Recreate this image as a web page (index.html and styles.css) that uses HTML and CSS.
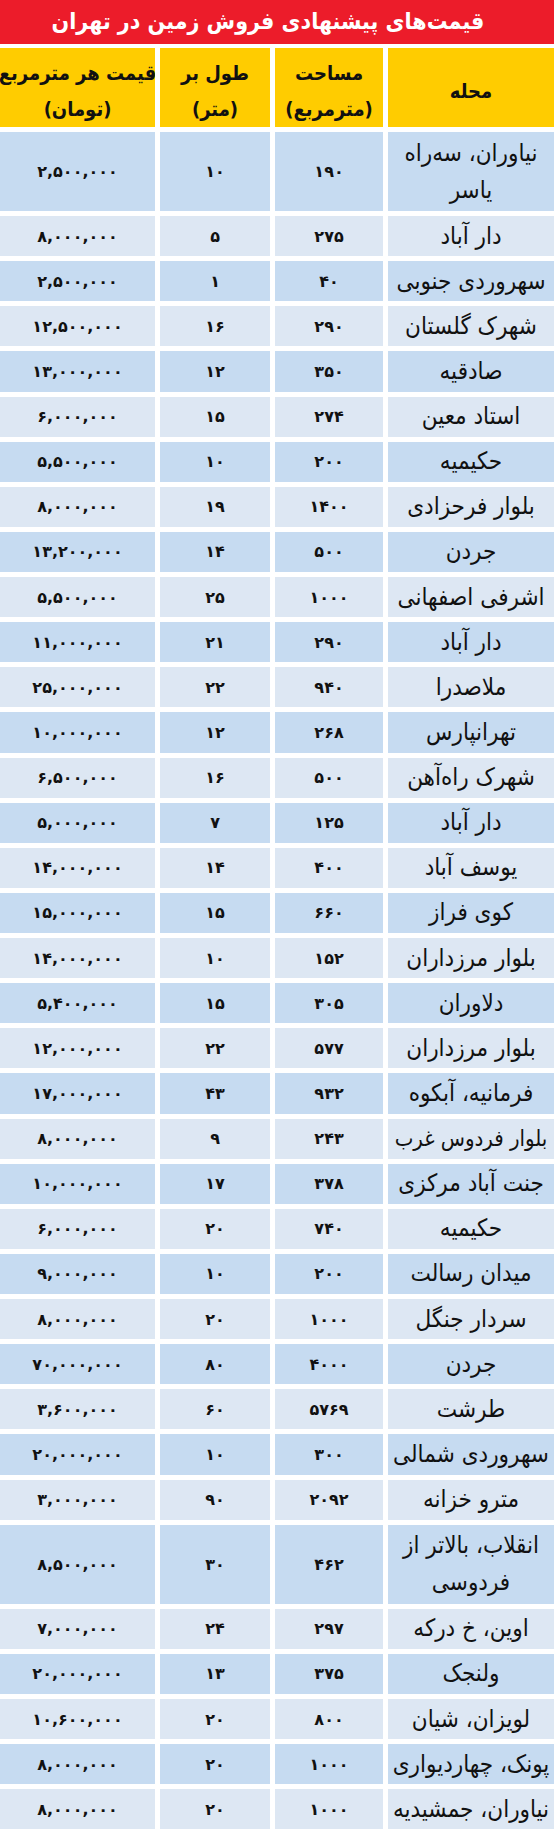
FILE: index.html
```html
<!DOCTYPE html>
<html lang="fa" dir="rtl">
<head>
<meta charset="utf-8">
<title>قیمت‌های پیشنهادی فروش زمین در تهران</title>
<link rel="stylesheet" href="styles.css">
</head>
<body>
<div class="sheet">
  <div class="title">قیمت‌های پیشنهادی فروش زمین در تهران</div>
  <div class="table">
    <div class="row head">
      <div class="cell">محله</div>
      <div class="cell">مساحت<br>(مترمربع)</div>
      <div class="cell">طول بر<br>(متر)</div>
      <div class="cell">قیمت هر مترمربع<br>(تومان)</div>
    </div>
    <div class="row tall"><div class="cell name">نیاوران، سه‌راه<br>یاسر</div><div class="cell num">۱۹۰</div><div class="cell num">۱۰</div><div class="cell num">۲,۵۰۰,۰۰۰</div></div>
    <div class="row"><div class="cell name">دار آباد</div><div class="cell num">۲۷۵</div><div class="cell num">۵</div><div class="cell num">۸,۰۰۰,۰۰۰</div></div>
    <div class="row"><div class="cell name">سهروردی جنوبی</div><div class="cell num">۴۰</div><div class="cell num">۱</div><div class="cell num">۲,۵۰۰,۰۰۰</div></div>
    <div class="row"><div class="cell name">شهرک گلستان</div><div class="cell num">۲۹۰</div><div class="cell num">۱۶</div><div class="cell num">۱۲,۵۰۰,۰۰۰</div></div>
    <div class="row"><div class="cell name">صادقیه</div><div class="cell num">۳۵۰</div><div class="cell num">۱۲</div><div class="cell num">۱۳,۰۰۰,۰۰۰</div></div>
    <div class="row"><div class="cell name">استاد معین</div><div class="cell num">۲۷۴</div><div class="cell num">۱۵</div><div class="cell num">۶,۰۰۰,۰۰۰</div></div>
    <div class="row"><div class="cell name">حکیمیه</div><div class="cell num">۲۰۰</div><div class="cell num">۱۰</div><div class="cell num">۵,۵۰۰,۰۰۰</div></div>
    <div class="row"><div class="cell name">بلوار فرحزادی</div><div class="cell num">۱۴۰۰</div><div class="cell num">۱۹</div><div class="cell num">۸,۰۰۰,۰۰۰</div></div>
    <div class="row"><div class="cell name">جردن</div><div class="cell num">۵۰۰</div><div class="cell num">۱۴</div><div class="cell num">۱۳,۲۰۰,۰۰۰</div></div>
    <div class="row"><div class="cell name">اشرفی اصفهانی</div><div class="cell num">۱۰۰۰</div><div class="cell num">۲۵</div><div class="cell num">۵,۵۰۰,۰۰۰</div></div>
    <div class="row"><div class="cell name">دار آباد</div><div class="cell num">۲۹۰</div><div class="cell num">۲۱</div><div class="cell num">۱۱,۰۰۰,۰۰۰</div></div>
    <div class="row"><div class="cell name">ملاصدرا</div><div class="cell num">۹۴۰</div><div class="cell num">۲۲</div><div class="cell num">۲۵,۰۰۰,۰۰۰</div></div>
    <div class="row"><div class="cell name">تهرانپارس</div><div class="cell num">۲۶۸</div><div class="cell num">۱۲</div><div class="cell num">۱۰,۰۰۰,۰۰۰</div></div>
    <div class="row"><div class="cell name">شهرک راه‌آهن</div><div class="cell num">۵۰۰</div><div class="cell num">۱۶</div><div class="cell num">۶,۵۰۰,۰۰۰</div></div>
    <div class="row"><div class="cell name">دار آباد</div><div class="cell num">۱۲۵</div><div class="cell num">۷</div><div class="cell num">۵,۰۰۰,۰۰۰</div></div>
    <div class="row"><div class="cell name">یوسف آباد</div><div class="cell num">۴۰۰</div><div class="cell num">۱۴</div><div class="cell num">۱۴,۰۰۰,۰۰۰</div></div>
    <div class="row"><div class="cell name">کوی فراز</div><div class="cell num">۶۶۰</div><div class="cell num">۱۵</div><div class="cell num">۱۵,۰۰۰,۰۰۰</div></div>
    <div class="row"><div class="cell name">بلوار مرزداران</div><div class="cell num">۱۵۲</div><div class="cell num">۱۰</div><div class="cell num">۱۴,۰۰۰,۰۰۰</div></div>
    <div class="row"><div class="cell name">دلاوران</div><div class="cell num">۳۰۵</div><div class="cell num">۱۵</div><div class="cell num">۵,۴۰۰,۰۰۰</div></div>
    <div class="row"><div class="cell name">بلوار مرزداران</div><div class="cell num">۵۷۷</div><div class="cell num">۲۲</div><div class="cell num">۱۲,۰۰۰,۰۰۰</div></div>
    <div class="row"><div class="cell name">فرمانیه، آبکوه</div><div class="cell num">۹۳۲</div><div class="cell num">۴۳</div><div class="cell num">۱۷,۰۰۰,۰۰۰</div></div>
    <div class="row"><div class="cell name long">بلوار فردوس غرب</div><div class="cell num">۲۴۳</div><div class="cell num">۹</div><div class="cell num">۸,۰۰۰,۰۰۰</div></div>
    <div class="row"><div class="cell name">جنت آباد مرکزی</div><div class="cell num">۳۷۸</div><div class="cell num">۱۷</div><div class="cell num">۱۰,۰۰۰,۰۰۰</div></div>
    <div class="row"><div class="cell name">حکیمیه</div><div class="cell num">۷۴۰</div><div class="cell num">۲۰</div><div class="cell num">۶,۰۰۰,۰۰۰</div></div>
    <div class="row"><div class="cell name">میدان رسالت</div><div class="cell num">۲۰۰</div><div class="cell num">۱۰</div><div class="cell num">۹,۰۰۰,۰۰۰</div></div>
    <div class="row"><div class="cell name">سردار جنگل</div><div class="cell num">۱۰۰۰</div><div class="cell num">۲۰</div><div class="cell num">۸,۰۰۰,۰۰۰</div></div>
    <div class="row"><div class="cell name">جردن</div><div class="cell num">۴۰۰۰</div><div class="cell num">۸۰</div><div class="cell num">۷۰,۰۰۰,۰۰۰</div></div>
    <div class="row"><div class="cell name">طرشت</div><div class="cell num">۵۷۶۹</div><div class="cell num">۶۰</div><div class="cell num">۳,۶۰۰,۰۰۰</div></div>
    <div class="row"><div class="cell name">سهروردی شمالی</div><div class="cell num">۳۰۰</div><div class="cell num">۱۰</div><div class="cell num">۲۰,۰۰۰,۰۰۰</div></div>
    <div class="row"><div class="cell name">مترو خزانه</div><div class="cell num">۲۰۹۲</div><div class="cell num">۹۰</div><div class="cell num">۳,۰۰۰,۰۰۰</div></div>
    <div class="row tall"><div class="cell name">انقلاب، بالاتر از<br>فردوسی</div><div class="cell num">۴۶۲</div><div class="cell num">۳۰</div><div class="cell num">۸,۵۰۰,۰۰۰</div></div>
    <div class="row"><div class="cell name">اوین، خ درکه</div><div class="cell num">۲۹۷</div><div class="cell num">۲۴</div><div class="cell num">۷,۰۰۰,۰۰۰</div></div>
    <div class="row"><div class="cell name">ولنجک</div><div class="cell num">۳۷۵</div><div class="cell num">۱۳</div><div class="cell num">۲۰,۰۰۰,۰۰۰</div></div>
    <div class="row"><div class="cell name">لویزان، شیان</div><div class="cell num">۸۰۰</div><div class="cell num">۲۰</div><div class="cell num">۱۰,۶۰۰,۰۰۰</div></div>
    <div class="row"><div class="cell name">پونک، چهاردیواری</div><div class="cell num">۱۰۰۰</div><div class="cell num">۲۰</div><div class="cell num">۸,۰۰۰,۰۰۰</div></div>
    <div class="row"><div class="cell name">نیاوران، جمشیدیه</div><div class="cell num">۱۰۰۰</div><div class="cell num">۲۰</div><div class="cell num">۸,۰۰۰,۰۰۰</div></div>
  </div>
</div>
</body>
</html>
```

FILE: styles.css
```css
html, body {
  margin: 0;
  padding: 0;
  background: #ffffff;
}

body {
  font-family: "DejaVu Sans Condensed", "DejaVu Sans", sans-serif;
  color: #111111;
}

.sheet {
  width: 554px;
  display: flex;
  flex-direction: column;
  gap: 4px;
}

.title {
  height: 44px;
  background: #ec1c2a;
  color: #ffffff;
  font-weight: bold;
  font-size: 23px;
  display: flex;
  align-items: center;
  justify-content: center;
  white-space: nowrap;
  padding-right: 18px;
  padding-bottom: 2px;
  box-sizing: border-box;
}

.table {
  display: flex;
  flex-direction: column;
  gap: 5px;
}

.row {
  display: grid;
  grid-template-columns: 166px 108px 110px 155px;
  column-gap: 5px;
  height: 40px;
}

.row:nth-child(4n+2),
.row:nth-child(4n+3) {
  height: 40.25px;
}

.row.tall {
  height: 79px;
}

.row.head {
  height: 79px;
}

.cell {
  display: flex;
  align-items: center;
  justify-content: center;
  text-align: center;
  white-space: nowrap;
  overflow: hidden;
}

.head .cell {
  background: #ffcc00;
  font-weight: bold;
  font-size: 20px;
  line-height: 36px;
  padding-top: 6px;
  box-sizing: border-box;
}

.row:nth-child(even) .cell {
  background: #c6dbf1;
}

.row:nth-child(odd):not(.head) .cell {
  background: #dde7f3;
}

.name {
  font-size: 24px;
  line-height: 37px;
}

.name.long {
  font-size: 22px;
}

.num {
  font-family: "DejaVu Sans", sans-serif;
  font-weight: bold;
  font-size: 16px;
}
```
